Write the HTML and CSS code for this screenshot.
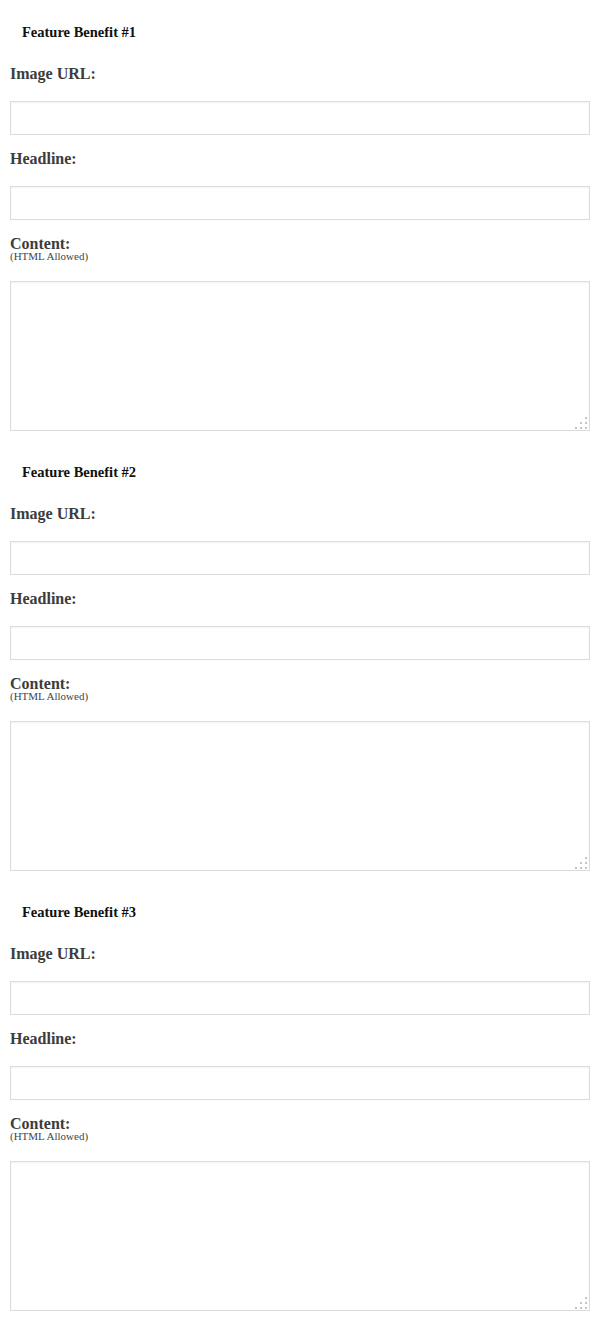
FILE: index.html
```html
<!DOCTYPE html>
<html>
<head>
  <meta name="viewport" content="width=device-width,initial-scale=1.0">
  <title>Feature Benefits</title>
  <link rel="stylesheet" href="styles.css">
</head>
<body>
  <div class="benefits">

    <div class="benefit">
      <h3 class="benefit-title">Feature Benefit #1</h3>
      <label class="field-label">Image URL:</label>
      <input class="field-input" type="text">
      <label class="field-label">Headline:</label>
      <input class="field-input" type="text">
      <div class="content-label">
        <label>Content:</label>
        <small>(HTML Allowed)</small>
      </div>
      <div class="area-wrap">
        <textarea class="field-area"></textarea>
        <svg class="grip" width="14" height="14" viewBox="0 0 14 14">
          <rect x="11" y="1" width="2" height="2"/>
          <rect x="6" y="6" width="2" height="2"/><rect x="11" y="6" width="2" height="2"/>
          <rect x="1" y="11" width="2" height="2"/><rect x="6" y="11" width="2" height="2"/><rect x="11" y="11" width="2" height="2"/>
        </svg>
      </div>
    </div>

    <div class="benefit">
      <h3 class="benefit-title">Feature Benefit #2</h3>
      <label class="field-label">Image URL:</label>
      <input class="field-input" type="text">
      <label class="field-label">Headline:</label>
      <input class="field-input" type="text">
      <div class="content-label">
        <label>Content:</label>
        <small>(HTML Allowed)</small>
      </div>
      <div class="area-wrap">
        <textarea class="field-area"></textarea>
        <svg class="grip" width="14" height="14" viewBox="0 0 14 14">
          <rect x="11" y="1" width="2" height="2"/>
          <rect x="6" y="6" width="2" height="2"/><rect x="11" y="6" width="2" height="2"/>
          <rect x="1" y="11" width="2" height="2"/><rect x="6" y="11" width="2" height="2"/><rect x="11" y="11" width="2" height="2"/>
        </svg>
      </div>
    </div>

    <div class="benefit">
      <h3 class="benefit-title">Feature Benefit #3</h3>
      <label class="field-label">Image URL:</label>
      <input class="field-input" type="text">
      <label class="field-label">Headline:</label>
      <input class="field-input" type="text">
      <div class="content-label">
        <label>Content:</label>
        <small>(HTML Allowed)</small>
      </div>
      <div class="area-wrap">
        <textarea class="field-area"></textarea>
        <svg class="grip" width="14" height="14" viewBox="0 0 14 14">
          <rect x="11" y="1" width="2" height="2"/>
          <rect x="6" y="6" width="2" height="2"/><rect x="11" y="6" width="2" height="2"/>
          <rect x="1" y="11" width="2" height="2"/><rect x="6" y="11" width="2" height="2"/><rect x="11" y="11" width="2" height="2"/>
        </svg>
      </div>
    </div>

  </div>
</body>
</html>
```

FILE: styles.css
```css
body {
  margin: 0;
  background: #fff;
  font-family: "Liberation Serif", "Times New Roman", serif;
  color: #3c3c3c;
}

.benefits {
  padding: 22px 10px 0;
}

.benefit {
  display: flex;
  flex-direction: column;
  margin-bottom: 31px;
}

.benefit-title {
  margin: 0 0 22px;
  padding-left: 12px;
  font-size: 14.5px;
  line-height: 20px;
  font-weight: bold;
  color: #111;
}

.field-label {
  display: block;
  font-size: 16px;
  line-height: 20px;
  font-weight: bold;
  margin-bottom: 17px;
}

.field-input {
  box-sizing: border-box;
  width: 100%;
  height: 34px;
  margin: 0 0 14px;
  padding: 4px 8px;
  border: 1px solid #dcdcdc;
  border-radius: 0;
  background: #fff;
  box-shadow: inset 0 1px 2px rgba(0, 0, 0, 0.05);
  font-family: inherit;
  font-size: 14px;
}
.field-input:focus { outline: none; }

.content-label {
  display: flex;
  flex-direction: column;
  margin-top: 3px;
  margin-bottom: 19px;
}
.content-label label {
  font-size: 16px;
  line-height: 14px;
  font-weight: bold;
}
.content-label small {
  font-size: 11px;
  line-height: 11px;
  color: #444;
}

.area-wrap {
  position: relative;
}

.field-area {
  display: block;
  box-sizing: border-box;
  width: 100%;
  height: 150px;
  margin: 0;
  padding: 6px 8px;
  border: 1px solid #dcdcdc;
  border-radius: 0;
  background: #fff;
  box-shadow: inset 0 1px 2px rgba(0, 0, 0, 0.05);
  font-family: inherit;
  font-size: 14px;
  resize: none;
}
.field-area:focus { outline: none; }

.grip {
  position: absolute;
  right: 2px;
  bottom: 1px;
  fill: #c4c4c4;
}
```
